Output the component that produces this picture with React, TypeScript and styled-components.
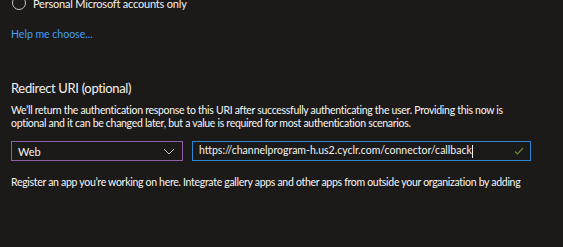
import React from "react";
import styled, { createGlobalStyle } from "styled-components";

const Global = createGlobalStyle`
  html, body { margin: 0; padding: 0; background: #1b1a19; }
  body { font-family: "Segoe UI", Lato, "Liberation Sans", sans-serif; color: #f3f2f1; overflow: hidden; }
`;

const Page = styled.div`
  width: 563px;
  height: 247px;
  overflow: hidden;
  box-sizing: border-box;
  padding: 0 0 0 11px;
  display: flex;
  flex-direction: column;
`;

const RadioRow = styled.label`
  display: flex;
  align-items: center;
  gap: 7px;
  margin-top: -4px;
  margin-left: 1px;
  height: 14px;
  font-size: 11px;
  letter-spacing: -0.2px;
  color: #f3f2f1;
`;

const RadioCircle = styled.span`
  width: 12px;
  height: 12px;
  border-radius: 50%;
  border: 1px solid #c8c6c4;
  flex: none;
`;

const HelpLink = styled.a`
  margin-top: 17px;
  font-size: 10.5px;
  line-height: 14px;
  color: #479ef5;
  text-decoration: none;
`;

const SectionTitle = styled.h2`
  margin: 38px 0 0;
  font-size: 13px;
  letter-spacing: -0.35px;
  line-height: 18px;
  font-weight: 400;
  color: #f3f2f1;
`;

const Description = styled.p`
  margin: 7px 0 0;
  width: 500px;
  font-size: 10.5px;
  letter-spacing: -0.3px;
  line-height: 13px;
  color: #f8f7f6;
`;

const FieldRow = styled.div`
  display: flex;
  gap: 9px;
  margin-top: 11px;
`;

const SelectBox = styled.div`
  box-sizing: border-box;
  width: 172px;
  height: 20px;
  border: 1px solid #8e5fa8;
  display: flex;
  align-items: center;
  justify-content: space-between;
  padding: 0 7px 0 6px;
  font-size: 11px;
  color: #f3f2f1;
`;

const UrlInput = styled.div`
  box-sizing: border-box;
  width: 339px;
  height: 20px;
  border: 1px solid #2f86d4;
  display: flex;
  align-items: center;
  justify-content: space-between;
  padding: 0 6px 0 6px;
  font-size: 10.5px;
  color: #f3f2f1;
`;

const Caret = styled.span`
  display: inline-block;
  width: 1px;
  height: 13px;
  background: #f3f2f1;
  vertical-align: middle;
`;

const Footer = styled.p`
  margin: 14px 0 0;
  white-space: nowrap;
  font-size: 10.5px;
  letter-spacing: -0.3px;
  line-height: 14px;
  color: #f8f7f6;
`;

export default function App() {
  return (
    <>
      <Global />
      <Page>
        <RadioRow>
          <RadioCircle />
          Personal Microsoft accounts only
        </RadioRow>
        <HelpLink href="#">Help me choose...</HelpLink>
        <SectionTitle>Redirect URI (optional)</SectionTitle>
        <Description>
          We’ll return the authentication response to this URI after successfully authenticating the user. Providing this now is optional and it can be changed later, but a value is required for most authentication scenarios.
        </Description>
        <FieldRow>
          <SelectBox>
            Web
            <svg width="12" height="7" viewBox="0 0 12 7">
              <path d="M1 1 L6 6 L11 1" fill="none" stroke="#c8c6c4" strokeWidth="1" />
            </svg>
          </SelectBox>
          <UrlInput>
            <span>
              https://channelprogram-h.us2.cyclr.com/connector/callback<Caret />
            </span>
            <svg width="10" height="8" viewBox="0 0 10 8">
              <path d="M1 4.5 L3.5 7 L9 1" fill="none" stroke="#6b8a3a" strokeWidth="1.2" />
            </svg>
          </UrlInput>
        </FieldRow>
        <Footer>
          Register an app you’re working on here. Integrate gallery apps and other apps from outside your organization by adding
        </Footer>
      </Page>
    </>
  );
}
